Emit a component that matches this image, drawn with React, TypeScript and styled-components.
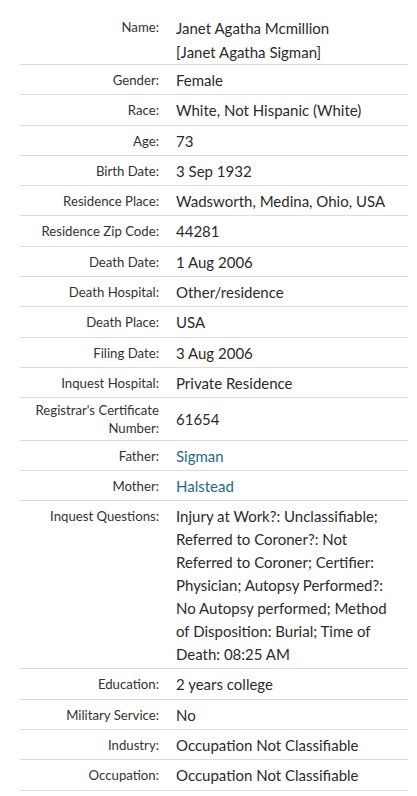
import styled, { createGlobalStyle } from 'styled-components'

// types
interface Fact {
  label: string
  value: string
  link?: boolean
  narrow?: boolean
}

const GlobalStyle = createGlobalStyle`
  body {
    margin: 0;
    background: #fff;
    font-family: Lato, 'Liberation Sans', sans-serif;
    color: #333;
  }
`

// styled components
const Table = styled.dl`
  margin: 0;
  padding: 12px 9px 0 20px;
`

const Row = styled.div<{ $middle?: boolean; $tight?: boolean }>`
  display: grid;
  grid-template-columns: 139px 1fr;
  column-gap: 17px;
  align-items: ${(p) => (p.$middle ? 'center' : 'start')};
  padding: 4px 0 ${(p) => (p.$tight ? '0' : '2.3px')};
  border-bottom: 1px solid #dcdcdc;
`

const Label = styled.dt<{ $wrap?: boolean }>`
  margin: 0;
  text-align: right;
  font-size: 13.2px;
  line-height: ${(p) => (p.$wrap ? '17.5px' : '23px')};
  color: #333;
`

const Value = styled.dd<{ $tall?: boolean; $narrow?: boolean }>`
  margin: 0;
  font-size: 15px;
  line-height: ${(p) => (p.$tall ? '24px' : '23px')};
  max-width: ${(p) => (p.$narrow ? '216px' : 'none')};
  color: #2b2b2b;
`

const Link = styled.a`
  color: #1f6a89;
  text-decoration: none;
`

const facts: Fact[] = [
  { label: 'Gender:', value: 'Female' },
  { label: 'Race:', value: 'White, Not Hispanic (White)' },
  { label: 'Age:', value: '73' },
  { label: 'Birth Date:', value: '3 Sep 1932' },
  { label: 'Residence Place:', value: 'Wadsworth, Medina, Ohio, USA' },
  { label: 'Residence Zip Code:', value: '44281' },
  { label: 'Death Date:', value: '1 Aug 2006' },
  { label: 'Death Hospital:', value: 'Other/residence' },
  { label: 'Death Place:', value: 'USA' },
  { label: 'Filing Date:', value: '3 Aug 2006' },
  { label: 'Inquest Hospital:', value: 'Private Residence' },
]

const family: Fact[] = [
  { label: 'Father:', value: 'Sigman', link: true },
  { label: 'Mother:', value: 'Halstead', link: true },
  {
    label: 'Inquest Questions:',
    value:
      'Injury at Work?: Unclassifiable; Referred to Coroner?: Not Referred to Coroner; Certifier: Physician; Autopsy Performed?: No Autopsy performed; Method of Disposition: Burial; Time of Death: 08:25 AM',
    narrow: true,
  },
  { label: 'Education:', value: '2 years college' },
  { label: 'Military Service:', value: 'No' },
  { label: 'Industry:', value: 'Occupation Not Classifiable' },
  { label: 'Occupation:', value: 'Occupation Not Classifiable' },
]

const FactRow = ({ fact }: { fact: Fact }) => (
  <Row>
    <Label>{fact.label}</Label>
    <Value $narrow={fact.narrow}>
      {fact.link ? <Link href="#">{fact.value}</Link> : fact.value}
    </Value>
  </Row>
)

export default function App() {
  return (
    <>
      <GlobalStyle />
      <Table>
        <Row $tight>
          <Label>Name:</Label>
          <Value $tall>
            Janet Agatha Mcmillion
            <br />
            [Janet Agatha Sigman]
          </Value>
        </Row>
        {facts.map((f) => (
          <FactRow key={f.label} fact={f} />
        ))}
        <Row $middle>
          <Label $wrap>
            Registrar's Certificate
            <br />
            Number:
          </Label>
          <Value>61654</Value>
        </Row>
        {family.map((f) => (
          <FactRow key={f.label} fact={f} />
        ))}
      </Table>
    </>
  )
}
